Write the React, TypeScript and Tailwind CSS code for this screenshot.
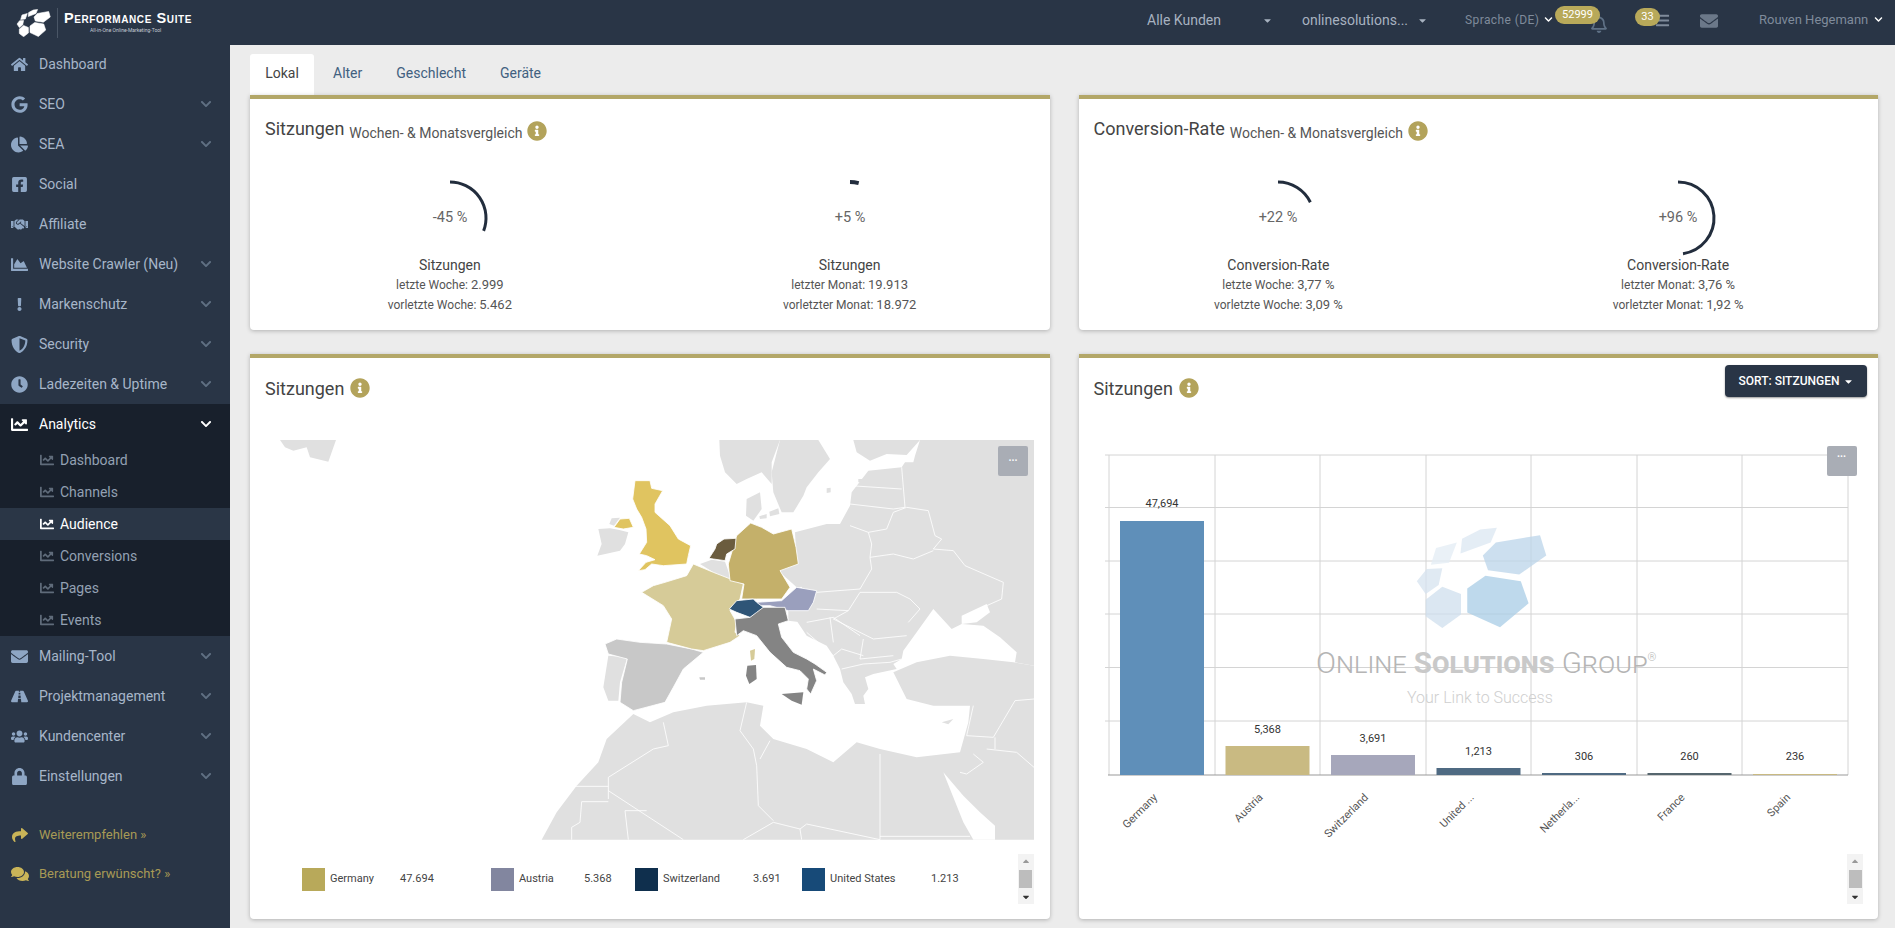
import {
  FaHome, FaGoogle, FaChartPie, FaFacebookSquare, FaHandshake, FaChartArea, FaExclamation,
  FaShieldAlt, FaClock, FaChartLine, FaEnvelope, FaRoad, FaUsers, FaLock, FaShare, FaComments,
  FaInfoCircle, FaChevronDown, FaBars, FaCaretDown, FaCaretUp, FaRegBell,
} from "react-icons/fa";
import type { ComponentType, ReactNode } from "react";

const topItems: { label: string; icon: ComponentType<{ className?: string }>; more?: boolean; size?: string }[] = [
  { label: "Dashboard", icon: FaHome },
  { label: "SEO", icon: FaGoogle, more: true },
  { label: "SEA", icon: FaChartPie, more: true },
  { label: "Social", icon: FaFacebookSquare },
  { label: "Affiliate", icon: FaHandshake },
  { label: "Website Crawler (Neu)", icon: FaChartArea, more: true },
  { label: "Markenschutz", icon: FaExclamation, more: true, size: "text-[13px]" },
  { label: "Security", icon: FaShieldAlt, more: true },
  { label: "Ladezeiten & Uptime", icon: FaClock, more: true },
];

const bottomItems = [
  { label: "Mailing-Tool", icon: FaEnvelope },
  { label: "Projektmanagement", icon: FaRoad },
  { label: "Kundencenter", icon: FaUsers },
  { label: "Einstellungen", icon: FaLock },
];

const subItems = ["Dashboard", "Channels", "Audience", "Conversions", "Pages", "Events"];

const legend = [
  { name: "Germany", value: "47.694", color: "bg-[#b8a95a]", box: "w-[189px]", label: "w-[70px]" },
  { name: "Austria", value: "5.368", color: "bg-[#82869f]", box: "w-[144px]", label: "w-[65px]" },
  { name: "Switzerland", value: "3.691", color: "bg-[#0f2f4d]", box: "w-[167px]", label: "w-[90px]" },
  { name: "United States", value: "1.213", color: "bg-[#174a78]", box: "w-[180px]", label: "w-[101px]" },
];

const bars = [
  { name: "Germany", value: "47,694", top: 522, label: 504, fill: "#5f8fb9" },
  { name: "Austria", value: "5,368", top: 747, label: 730, fill: "#c9ba82" },
  { name: "Switzerland", value: "3,691", top: 756, label: 739, fill: "#a6a7bb" },
  { name: "United ...", value: "1,213", top: 769, label: 752, fill: "#4f6a82" },
  { name: "Netherla...", value: "306", top: 774, label: 757, fill: "#4f6a82" },
  { name: "France", value: "260", top: 774, label: 757, fill: "#56666e" },
  { name: "Spain", value: "236", top: 775, label: 757, fill: "#c9ba82" },
];

const logoShapes = [
  { points: "745,650 780,615 848,630 863,690 808,755 745,715", fill: "#a9cde6" },
  { points: "775,560 800,525 885,505 897,560 845,612 785,600", fill: "#bcd5ea" },
  { points: "665,680 697,645 733,665 733,720 697,757 665,725", fill: "#cfdfee" },
  { points: "648,630 667,597 697,595 690,640 665,665", fill: "#d6e3f0" },
  { points: "685,540 725,525 710,580 675,585", fill: "#e4edf5" },
  { points: "735,515 770,490 802,485 790,525 732,555", fill: "#dce7f2" },
];

function Info() {
  return <FaInfoCircle className="text-[20px] text-[#b3a35b] shrink-0" />;
}

function arcPath(deg: number) {
  const r = 36;
  const rad = (deg * Math.PI) / 180;
  const x = 40 + r * Math.sin(rad);
  const y = 40 - r * Math.cos(rad);
  return `M 40 4 A ${r} ${r} 0 ${deg > 180 ? 1 : 0} 1 ${x.toFixed(2)} ${y.toFixed(2)}`;
}

function Gauge({ deg, pct, title, line1, value1, line2, value2 }: {
  deg: number; pct: string; title: string; line1: string; value1: string; line2: string; value2: string;
}) {
  return (
    <div className="flex flex-col items-center">
      <svg width="80" height="80" viewBox="0 0 80 80" className="block">
        <path d={arcPath(deg)} fill="none" stroke="#222d3d" strokeWidth={deg < 20 ? 4 : 3} />
        <text x="40" y="44" textAnchor="middle" fontSize="14.5" fill="#666">{pct}</text>
      </svg>
      <div className="mt-[-3px] text-[14px] leading-[20px] text-[#444]">{title}</div>
      <div className="text-[12px] leading-[20px] text-[#555]">{line1} <span className="text-[13px]">{value1}</span></div>
      <div className="text-[12px] leading-[20px] text-[#555]">{line2} <span className="text-[13px]">{value2}</span></div>
    </div>
  );
}

function Card({ children, className }: { children: ReactNode; className: string }) {
  return (
    <section className={`relative bg-white border-t-[4px] border-[#b3a768] rounded-b-[4px] shadow-[0_1px_4px_rgba(0,0,0,0.25)] ${className}`}>
      {children}
    </section>
  );
}

function CompareTitle({ title }: { title: string }) {
  return (
    <div className="flex items-center gap-[5px] h-[19px] mt-[20px] pl-[15px]">
      <span className="text-[18px] text-[#444]">{title}</span>
      <span className="text-[14px] text-[#555] mt-[10px]">Wochen- & Monatsvergleich</span>
      <span className="mt-[4px]"><Info /></span>
    </div>
  );
}

function Scroller() {
  return (
    <div className="w-[16px] h-[50px] bg-[#f3f3f3] flex flex-col items-center justify-between text-[10px]">
      <FaCaretUp className="text-[#999] mt-[2px]" />
      <div className="w-[13px] h-[18px] bg-[#bdbdbd]" />
      <FaCaretDown className="text-[#333] mb-[2px]" />
    </div>
  );
}

function MenuButton({ className }: { className: string }) {
  return (
    <div className={`absolute w-[30px] bg-[#a9adb5] rounded-[2px] flex justify-center text-[10px] font-bold leading-none text-white ${className}`}>
      ···
    </div>
  );
}

function EuropeMap() {
  const land = "#e0e0e0";
  return (
    <svg width="769" height="400" viewBox="-825 33 2307 1200" className="block">
      {/* land */}
      <g fill={land}>
        <polygon points="-780,33 -612,33 -635,98 -690,85 -700,55 -740,65 -765,55" />
        <polygon points="538,33 720,33 695,100 695,165 665,130 620,150 590,165 555,130 540,80" />
        <polygon points="720,33 835,33 870,90 835,130 800,175 790,200 760,250 725,250 700,190 695,130" />
        <polygon points="940,33 1140,33 1100,78 1040,75 990,95 950,70" />
        <polygon points="620,210 660,190 665,240 640,275 618,260" />
        <polygon points="658,262 680,255 680,268 660,270" />
        <polygon points="688,248 715,238 718,255 690,262" />
        <polygon points="860,178 872,176 872,190 860,192" />
        <polygon points="955,150 975,150 970,160 955,160" />
        <polygon points="765,310 860,285 900,285 930,230 935,190 985,125 1085,115 1095,100 1120,100 1125,80 1140,33 1482,33 1482,710 1425,700 1430,670 1380,625 1330,590 1265,585 1235,600 1180,540 1130,610 1090,665 1085,690 1060,705 1070,720 1000,735 975,745 985,780 970,800 975,825 945,825 935,795 910,760 900,720 880,680 860,650 800,620 770,575 800,545 770,400" />
        <polygon points="5,1232 50,1150 110,1070 175,1000 200,930 280,855 330,880 400,850 500,830 620,820 670,830 660,890 700,930 800,960 880,1000 950,940 1020,960 1130,985 1260,970 1285,880 1290,830 1180,830 1100,810 1060,730 1130,700 1230,680 1330,690 1420,700 1482,710 1482,1232" />
        <polygon points="175,300 210,298 235,302 265,310 255,345 240,365 172,380 185,345" />
        <polygon points="208,285 215,268 240,266 222,290" />
        <polygon points="480,405 515,392 555,398 570,440 565,455 520,430" />
        <polygon points="205,680 262,685 240,760 235,815 205,815 190,775" />
        <polygon points="715,425 770,405 830,430 870,450 830,470 770,475" />
        <polygon points="745,545 805,545 800,580 770,578 745,575" />
        <polygon points="1205,880 1240,870 1225,886" />
      </g>
      {/* seas */}
      <g fill="#fff">
        <polygon points="1210,1030 1270,1100 1320,1150 1365,1190 1365,1232 1300,1232 1270,1180 1230,1080" />
        <polygon points="1265,560 1340,525 1350,550 1310,580 1265,585" />
      </g>
      {/* Laender mit Daten */}
      <g stroke="#fff" strokeWidth="2.5" strokeLinejoin="round">
        <polygon fill="#c8c8c8" points="195,645 230,630 300,640 380,645 455,660 490,670 430,720 400,775 375,820 280,845 240,820 245,760 262,690 205,675" />
        <polygon fill="#c8c8c8" stroke="none" points="478,745 495,745 495,752 480,752" />
        <polygon fill="#e0c460" points="285,155 330,155 335,178 368,185 345,225 345,250 390,290 415,330 452,350 445,380 440,405 370,410 335,405 315,422 295,425 318,400 345,392 320,380 298,375 320,340 318,300 305,265 290,240 278,210" />
        <polygon fill="#e0c460" points="222,295 240,270 268,268 280,295 250,300" />
        <polygon fill="#d6cb98" points="460,405 520,430 610,465 600,510 570,545 590,580 585,610 600,620 570,640 490,665 455,660 380,640 395,570 370,530 305,490 340,470 375,460 440,440" />
        <polygon fill="#c4b06a" points="632,282 665,295 700,315 755,300 768,355 775,405 720,425 750,475 725,510 650,510 605,510 612,465 570,455 565,405 590,320" />
        <polygon fill="#6b5c3e" points="507,388 525,360 530,345 552,330 588,328 585,360 560,375 555,395 520,390" />
        <polygon fill="#9a9fbd" points="650,520 725,515 770,475 830,485 820,520 805,545 745,545 690,530 660,530" />
        <polygon fill="#848484" points="585,570 630,565 660,535 735,535 745,575 715,585 725,625 760,670 800,690 825,705 860,730 855,738 820,720 830,755 812,795 800,780 805,750 780,725 740,715 690,670 650,620 610,605 590,620" />
        <polygon fill="#2f5577" points="568,540 590,515 640,510 650,520 670,535 650,550 630,565 590,550" />
        <polygon fill="#848484" stroke="none" points="725,795 790,790 785,827 755,815" />
        <polygon fill="#848484" stroke="none" points="622,710 648,708 650,750 628,765 618,740" />
        <polygon fill="#d6cb98" stroke="none" points="630,665 645,660 643,690 633,695" />
      </g>
      {/* Grenzen */}
      <g fill="none" stroke="#fff" strokeWidth="2.5">
        <polyline points="370,880 385,950 340,960 205,1045 205,1110" />
        <polyline points="105,1072 205,1072" />
        <polyline points="205,1085 430,1232" />
        <polyline points="205,1118 125,1118 120,1180 95,1195 95,1232" />
        <polyline points="320,1145 255,1145 265,1232" />
        <polyline points="620,820 600,905 640,960 650,1010 655,1130 700,1175" />
        <polyline points="610,1232 700,1180 780,1200 800,1185 1020,1232" />
        <polyline points="780,1200 785,1232" />
        <polyline points="660,990 690,935" />
        <polyline points="1020,975 1020,1232" />
        <polyline points="1020,1222 1290,1222" />
        <polyline points="1300,830 1280,920 1360,925 1425,815 1482,810" />
        <polyline points="1260,1030 1280,1035 1330,1000 1300,975" />
        <polyline points="1340,960 1430,970 1482,1015" />
        <polyline points="1365,925 1365,960" />
        <polyline points="985,310 995,345 990,385 995,420 960,480" />
        <polyline points="930,290 985,310 1040,300 1060,250 1100,235 1165,245 1185,320 1205,330 1180,360 1240,365 1275,410 1390,460 1385,510 1340,530" />
        <polyline points="990,385 1060,375 1120,390 1180,365" />
        <polyline points="930,225 1060,240 1095,235 1085,115" />
        <polyline points="930,170 1085,180" />
        <polyline points="960,490 1070,490 1110,510 1140,540 1105,580" />
        <polyline points="960,490 925,545 880,570 1000,630 1100,620" />
        <polyline points="970,630 960,690 1060,680" />
        <polyline points="830,490 960,480" />
        <polyline points="830,540 925,545" />
        <polyline points="800,580 880,565 960,620" />
        <polyline points="800,610 880,680 905,660 970,680" />
        <polyline points="905,720 970,705 1050,700 1085,690" />
        <polyline points="870,565 880,640" />
      </g>
    </svg>
  );
}

function BarChart() {
  const xs = [1109, 1215, 1320, 1426, 1531, 1637, 1742, 1848];
  const ys = [456, 508.5, 562, 615, 668.5, 722];
  return (
    <svg width="771" height="401" viewBox="1094 441 771 401" className="block">
      <g stroke="#d4d4d4" strokeWidth="1">
        {xs.map((x) => <line key={x} x1={x} x2={x} y1={456} y2={776} />)}
        {ys.map((y) => <line key={y} x1={1105} x2={1848} y1={y} y2={y} />)}
      </g>
      <line x1={1108} x2={1848} y1={776} y2={776} stroke="#999" />
      <g transform="translate(1080 350) scale(0.5198 0.3686)" opacity="0.75">
        {logoShapes.map((s) => <polygon key={s.points} points={s.points} fill={s.fill} />)}
      </g>
      <text x="1316" y="674" fontSize="29.5" fontWeight="300" fill="#b5b5b5" className="[font-variant:small-caps]">
        Online <tspan fontWeight="700" fill="#c9c9c9">Solutions</tspan> Group<tspan fontSize="11" dy="-12">®</tspan>
      </text>
      <text x="1407" y="704" fontSize="16" fontWeight="300" fill="#cfcfcf">Your Link to Success</text>
      {bars.map((b, i) => {
        const cx = (xs[i] + xs[i + 1]) / 2;
        return (
          <g key={b.name}>
            <rect x={cx - 42} y={b.top} width="84" height={776 - b.top} fill={b.fill} />
            <text x={cx} y={b.label + 4} textAnchor="middle" fontSize="11" fill="#333">{b.value}</text>
            <text x={cx - 4} y={799} textAnchor="end" fontSize="11" fill="#555" transform={`rotate(-45 ${cx - 4} 799)`}>{b.name}</text>
          </g>
        );
      })}
    </svg>
  );
}

export default function App() {
  return (
    <div className="h-screen overflow-hidden flex flex-col bg-[#ececec] font-['Roboto',sans-serif]">
      <header className="h-[45px] shrink-0 flex items-center bg-[#293546] text-[#a7b2c0]">
        <div className="w-[230px] shrink-0 flex items-center pl-[16px]">
          <svg width="36" height="28" viewBox="640 480 270 280" preserveAspectRatio="none">
            {logoShapes.map((s) => <polygon key={s.points} points={s.points} fill="#fff" stroke="#fff" strokeWidth="5" strokeLinejoin="round" />)}
          </svg>
          <div className="w-px h-[30px] bg-[#4a5666] ml-[5px] mr-[6px]" />
          <div className="flex flex-col">
            <span className="font-['Liberation_Sans',sans-serif] font-bold text-[14.5px] leading-[14px] tracking-[0.6px] text-white whitespace-nowrap [font-variant:small-caps]">Performance Suite</span>
            <span className="text-[5px] leading-[7px] mt-[2px] pl-[26px] text-[#c5ccd6] whitespace-nowrap">All-in-One Online-Marketing-Tool</span>
          </div>
        </div>
        <div className="flex items-center pl-[917px] flex-1 -mt-[4px]">
          <div className="w-[155px] flex items-center text-[14px] pr-[29px]">
            <span>Alle Kunden</span>
            <FaCaretDown className="ml-auto text-[11px]" />
          </div>
          <div className="w-[163px] flex items-center text-[14px] pr-[37px]">
            <span className="whitespace-nowrap">onlinesolutions...</span>
            <FaCaretDown className="ml-auto text-[11px]" />
          </div>
          <div className="w-[190px] flex items-center text-[12px] tracking-[0.4px] text-[#7f8b9b] relative -mt-[2px]">
            <span>Sprache (DE)</span>
            <FaChevronDown className="ml-[5px] text-[9px] text-white" />
            <FaRegBell className="absolute left-[125px] top-[4px] text-[18px] text-[#5f7186]" />
            <span className="absolute left-[90px] top-[-5px] w-[45px] h-[18px] rounded-[9px] bg-[#b8a95a] text-white text-[11px] leading-[18px] text-center tracking-normal">52999</span>
          </div>
          <div className="w-[45px] relative h-[18px] -mt-[1px]">
            <FaBars className="absolute left-[0px] top-[2px] text-[15px] text-[#7f8b9b]" />
            <span className="absolute left-[-20px] top-[-3px] w-[25px] h-[18px] rounded-[9px] bg-[#b8a95a] text-white text-[11px] leading-[18px] text-center">33</span>
          </div>
          <FaEnvelope className="text-[18px] text-[#6b7889] w-[18px]" />
          <div className="ml-[41px] flex items-center text-[13px] text-[#7f8b9b] -mt-[2px]">
            <span className="whitespace-nowrap">Rouven Hegemann</span>
            <FaChevronDown className="ml-[6px] text-[9px] text-white" />
          </div>
        </div>
      </header>

      <div className="flex flex-1 min-h-0">
        <aside className="w-[230px] shrink-0 bg-[#293546] text-[14px] -mt-px">
          {topItems.map((item) => (
            <div key={item.label} className="h-10 flex items-center text-[#a7b6c9]">
              <span className="w-[39px] flex justify-center shrink-0">
                <item.icon className={`${item.size ?? "text-[17px]"} text-[#8ea6c4]`} />
              </span>
              <span>{item.label}</span>
              {item.more && <FaChevronDown className="ml-auto mr-[18px] text-[12px] text-[#5f6f82]" />}
            </div>
          ))}
          <div className="bg-[#18202c]">
            <div className="h-10 flex items-center text-white">
              <span className="w-[39px] flex justify-center shrink-0"><FaChartLine className="text-[17px]" /></span>
              <span>Analytics</span>
              <FaChevronDown className="ml-auto mr-[18px] text-[12px]" />
            </div>
            {subItems.map((label) => (
              <div key={label} className={`h-8 flex items-center pl-[40px] ${label === "Audience" ? "bg-[#2a3646] text-white" : "text-[#93a1b3]"}`}>
                <FaChartLine className={`text-[14px] mr-[6px] ${label === "Audience" ? "text-white" : "text-[#5f6b7a]"}`} />
                <span>{label}</span>
              </div>
            ))}
          </div>
          {bottomItems.map((item) => (
            <div key={item.label} className="h-10 flex items-center text-[#a7b6c9]">
              <span className="w-[39px] flex justify-center shrink-0">
                <item.icon className="text-[17px] text-[#8ea6c4]" />
              </span>
              <span>{item.label}</span>
              <FaChevronDown className="ml-auto mr-[18px] text-[12px] text-[#5f6f82]" />
            </div>
          ))}
          <div className="h-[39px] mt-[19px] flex items-center text-[13px] text-[#a89a55]">
            <span className="w-[39px] flex justify-center shrink-0"><FaShare className="text-[16px] text-[#c9b458]" /></span>
            <span>Weiterempfehlen »</span>
          </div>
          <div className="h-[39px] flex items-center text-[13px] text-[#a89a55]">
            <span className="w-[39px] flex justify-center shrink-0"><FaComments className="text-[18px] text-[#c9b458]" /></span>
            <span>Beratung erwünscht? »</span>
          </div>
        </aside>

        <main className="flex-1 min-w-0 pl-5 pr-[17px] pt-[9px]">
          <nav className="flex h-[41px] text-[14px] text-[#41607f]">
            <div className="w-[64px] bg-white rounded-t-[3px] flex items-center justify-center text-[#444] pb-[2px] mr-[2px]">Lokal</div>
            <div className="px-[17px] flex items-center pb-[2px]">Alter</div>
            <div className="px-[17px] flex items-center pb-[2px]">Geschlecht</div>
            <div className="px-[17px] flex items-center pb-[2px]">Geräte</div>
          </nav>
          <div className="grid grid-cols-2 gap-x-[29px] gap-y-[24px]">
            <Card className="h-[235px]">
              <CompareTitle title="Sitzungen" />
              <div className="grid grid-cols-2 mt-[40px]">
                <Gauge deg={111} pct="-45 %" title="Sitzungen" line1="letzte Woche:" value1="2.999" line2="vorletzte Woche:" value2="5.462" />
                <Gauge deg={14} pct="+5 %" title="Sitzungen" line1="letzter Monat:" value1="19.913" line2="vorletzter Monat:" value2="18.972" />
              </div>
            </Card>
            <Card className="h-[235px]">
              <CompareTitle title="Conversion-Rate" />
              <div className="grid grid-cols-2 mt-[40px]">
                <Gauge deg={64} pct="+22 %" title="Conversion-Rate" line1="letzte Woche:" value1="3,77 %" line2="vorletzte Woche:" value2="3,09 %" />
                <Gauge deg={172} pct="+96 %" title="Conversion-Rate" line1="letzter Monat:" value1="3,76 %" line2="vorletzter Monat:" value2="1,92 %" />
              </div>
            </Card>
            <Card className="h-[565px]">
              <div className="h-[82px] pl-[15px] pt-[20px] flex items-start gap-[6px]">
                <span className="text-[18px] leading-[22px] text-[#444]">Sitzungen</span>
                <Info />
              </div>
              <div className="relative ml-[15px] w-[769px]">
                <EuropeMap />
                <MenuButton className="top-[6px] right-[6px] h-[30px] items-center" />
              </div>
              <div className="flex items-center mt-[14px] h-[50px] pl-[52px] pr-[16px]">
                {legend.map((l) => (
                  <div key={l.name} className={`flex items-center text-[11px] text-[#444] ${l.box}`}>
                    <span className={`w-[23px] h-[23px] mr-[5px] shrink-0 ${l.color}`} />
                    <span className={`${l.label} shrink-0`}>{l.name}</span>
                    <span>{l.value}</span>
                  </div>
                ))}
                <div className="ml-auto"><Scroller /></div>
              </div>
            </Card>
            <Card className="h-[565px]">
              <div className="h-[82px] pl-[15px] pr-[11px] pt-[7px] flex items-start justify-between">
                <div className="flex items-start gap-[6px] mt-[13px]">
                  <span className="text-[18px] leading-[22px] text-[#444]">Sitzungen</span>
                  <Info />
                </div>
                <button className="w-[142px] h-[32px] rounded-[4px] bg-[#293546] shadow-[0_1px_2px_rgba(0,0,0,0.4)] text-white text-[12px] font-medium flex items-center justify-center gap-[3px]">
                  SORT: SITZUNGEN <FaCaretDown className="text-[11px]" />
                </button>
              </div>
              <div className="relative ml-[15px] w-[771px]">
                <BarChart />
                <MenuButton className="top-[6px] right-[8px] h-[30px] pt-[6px]" />
              </div>
              <div className="flex justify-end mt-[13px] pr-[15px]"><Scroller /></div>
            </Card>
          </div>
        </main>
      </div>
    </div>
  );
}
